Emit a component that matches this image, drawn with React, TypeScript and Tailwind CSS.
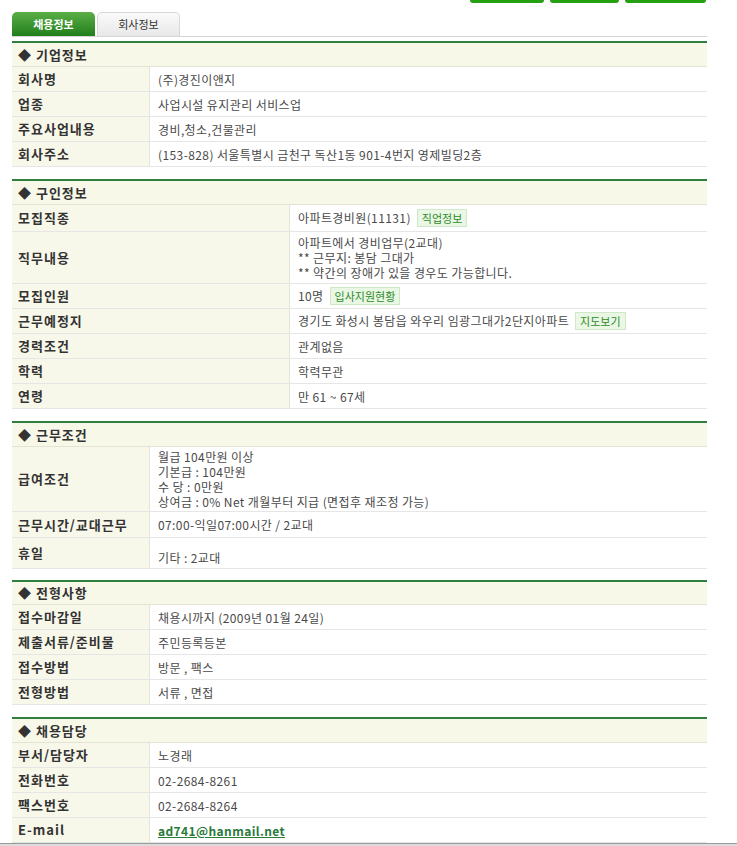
import type { ReactNode } from 'react';

type Row = { label: string; value: ReactNode; h?: string };

const font = "font-['Noto_Sans_CJK_KR','Noto_Sans',sans-serif]";

function Badge({ children }: { children: ReactNode }) {
  return (
    <span className="ml-1.5 inline-block border border-[#cfe8c8] bg-[#e9f7e4] px-1 text-[11px] leading-[16px] tracking-normal text-[#2f8a2a]">
      {children}
    </span>
  );
}

function Section({
  title,
  labelW,
  rows,
  className = 'mt-3',
  headH = 'h-6',
}: {
  title: string;
  labelW: string;
  rows: Row[];
  className?: string;
  headH?: string;
}) {
  return (
    <div className={`border-t-2 border-[#2f7f3f] ${className}`}>
      <div
        className={`flex ${headH} items-center border-b border-[#e4e4d4] bg-[#f8f8e8] pl-1.5 text-[13px] font-bold tracking-[1px] text-[#333]`}
      >
        ◆ {title}
      </div>
      {rows.map((r) => (
        <div key={r.label} className={`flex border-b border-[#e6e6e6] ${r.h ?? 'min-h-[25px]'}`}>
          <div
            className={`${labelW} flex shrink-0 items-center border-r border-[#e4e4dc] bg-[#f8f8ea] pl-1.5 text-[13px] font-bold tracking-[1px] text-[#333]`}
          >
            {r.label}
          </div>
          <div className="flex flex-1 items-center px-2 py-[2px] text-[12px] leading-[15px] tracking-[0.4px] text-[#4a4a4a]">
            {r.value}
          </div>
        </div>
      ))}
    </div>
  );
}

export default function App() {
  return (
    <div className={`${font} min-h-[846px] w-[737px] bg-white`}>
      <div className="w-[707px] pl-3">
        {/* top buttons, cut off by the frame */}
        <div className="flex h-[3px] justify-end gap-[6px] pr-px">
          <div className="w-[74px] rounded-b-[3px] bg-[#25a010]" />
          <div className="w-[69px] rounded-b-[3px] bg-[#25a010]" />
          <div className="w-[81px] rounded-b-[3px] bg-[#25a010]" />
        </div>

        {/* tabs */}
        <div className="mt-[9px] flex h-[25px] items-end gap-[2px] border-b border-[#d6d6d6]">
          <div className="flex h-[24px] w-[83px] items-center justify-center rounded-t-[5px] bg-gradient-to-b from-[#5aae47] to-[#1f7f1a] text-[11px] font-bold text-white">
            채용정보
          </div>
          <div className="flex h-[24px] w-[83px] items-center justify-center rounded-t-[5px] border border-b-0 border-[#d8d8d8] bg-gradient-to-b from-[#fafafa] to-[#e8e8e8] text-[11px] text-[#333]">
            회사정보
          </div>
        </div>

        <div className="flex flex-col">
          <Section
            title="기업정보"
            labelW="w-[138px]"
            className="mt-1"
            rows={[
              { label: '회사명', value: '(주)경진이앤지' },
              { label: '업종', value: '사업시설 유지관리 서비스업' },
              { label: '주요사업내용', value: '경비,청소,건물관리' },
              { label: '회사주소', value: '(153-828) 서울특별시 금천구 독산1동 901-4번지 영제빌딩2층' },
            ]}
          />
          <Section
            title="구인정보"
            labelW="w-[278px]"
            rows={[
              {
                label: '모집직종',
                h: 'min-h-[27px]',
                value: (
                  <span>
                    아파트경비원(11131)<Badge>직업정보</Badge>
                  </span>
                ),
              },
              {
                label: '직무내용',
                h: 'min-h-[52px]',
                value: (
                  <div>
                    아파트에서 경비업무(2교대)
                    <br />** 근무지: 봉담 그대가
                    <br />** 약간의 장애가 있을 경우도 가능합니다.
                  </div>
                ),
              },
              {
                label: '모집인원',
                value: (
                  <span>
                    10명<Badge>입사지원현황</Badge>
                  </span>
                ),
              },
              {
                label: '근무예정지',
                value: (
                  <span>
                    경기도 화성시 봉담읍 와우리 임광그대가2단지아파트<Badge>지도보기</Badge>
                  </span>
                ),
              },
              { label: '경력조건', value: '관계없음' },
              { label: '학력', value: '학력무관' },
              { label: '연령', value: '만 61 ~ 67세' },
            ]}
          />
          <Section
            title="근무조건"
            labelW="w-[138px]"
            rows={[
              {
                label: '급여조건',
                h: 'min-h-[65px]',
                value: (
                  <div>
                    월급 104만원 이상
                    <br />기본급 : 104만원
                    <br />수 당 : 0만원
                    <br />상여금 : 0% Net 개월부터 지급 (면접후 재조정 가능)
                  </div>
                ),
              },
              { label: '근무시간/교대근무', h: 'min-h-[26px]', value: '07:00-익일07:00시간 / 2교대' },
              { label: '휴일', h: 'min-h-[31px]', value: <span className="mt-2">기타 : 2교대</span> },
            ]}
          />
          <Section
            title="전형사항"
            labelW="w-[138px]"
            className="mt-[11px]"
            headH="h-[23px]"
            rows={[
              { label: '접수마감일', value: '채용시까지 (2009년 01월 24일)' },
              { label: '제출서류/준비물', value: '주민등록등본' },
              { label: '접수방법', value: '방문 , 팩스' },
              { label: '전형방법', value: '서류 , 면접' },
            ]}
          />
          <Section
            title="채용담당"
            labelW="w-[138px]"
            rows={[
              { label: '부서/담당자', value: '노경래' },
              { label: '전화번호', value: '02-2684-8261' },
              { label: '팩스번호', value: '02-2684-8264' },
              {
                label: 'E-mail',
                value: (
                  <a href="#" className="font-bold text-[#2a7a3a] underline">
                    ad741@hanmail.net
                  </a>
                ),
              },
            ]}
          />
        </div>
      </div>
      <div className="h-[3px] w-full border-t border-[#9a9a9a] bg-[#dcdcdc]" />
    </div>
  );
}
